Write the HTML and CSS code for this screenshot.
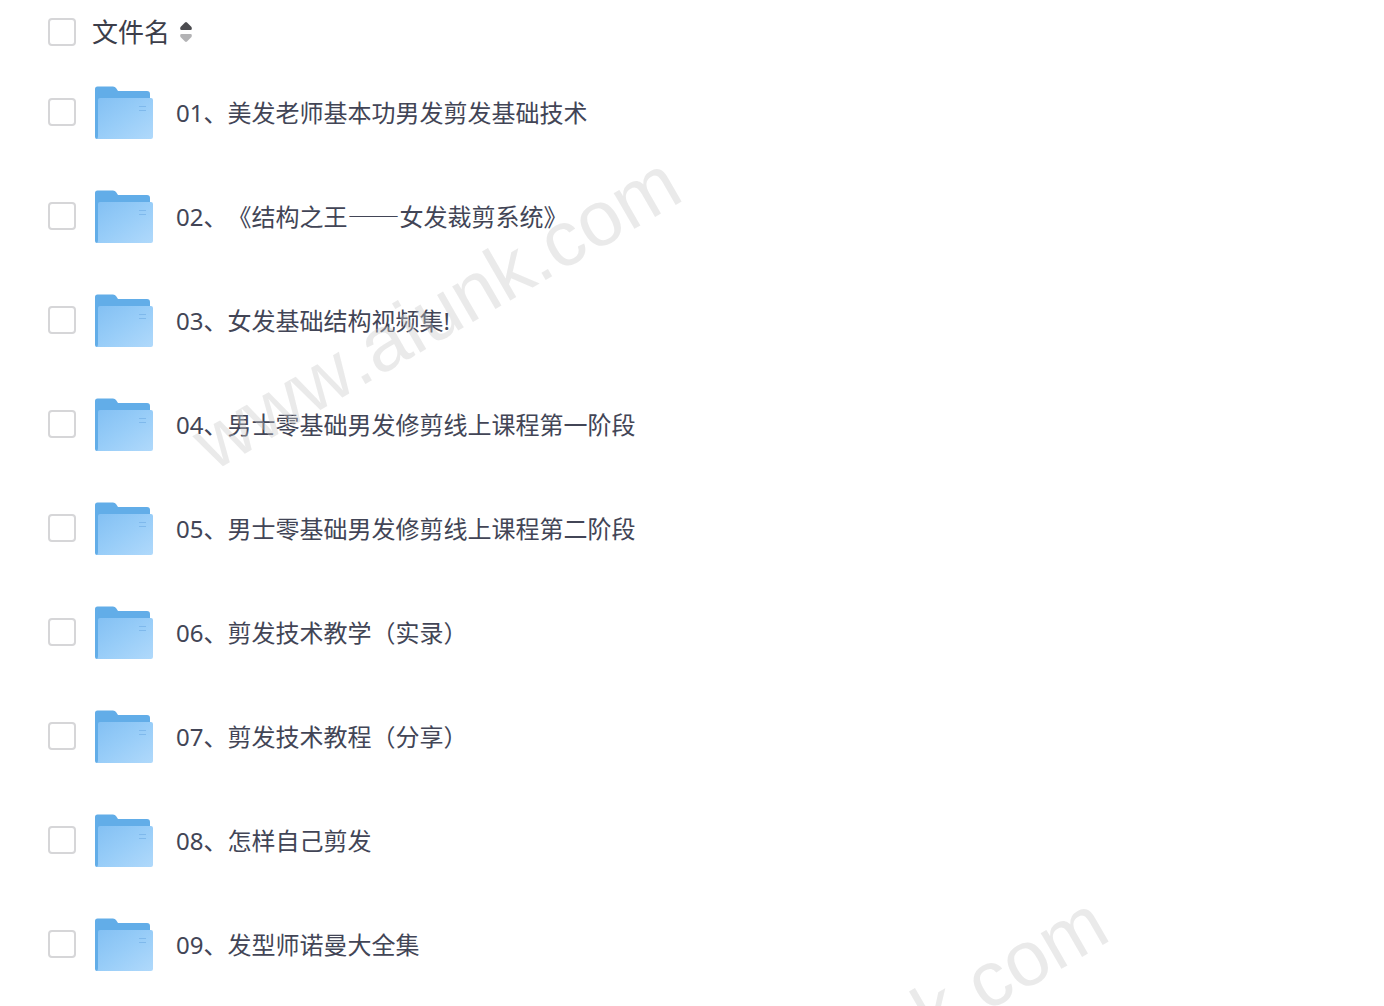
FILE: index.html
```html
<!DOCTYPE html>
<html lang="zh-CN">
<head>
    <meta charset="UTF-8">
    <meta name="viewport" content="width=device-width, initial-scale=1.0">
    <title>文件名</title>
    <link rel="stylesheet" href="styles.css">
</head>
<body>
    <svg class="defs" width="0" height="0" aria-hidden="true">
        <defs>
            <linearGradient id="folder-front" x1="0" y1="0" x2="1" y2="1">
                <stop offset="0" stop-color="#83c0f3"/>
                <stop offset="0.5" stop-color="#98cdf8"/>
                <stop offset="1" stop-color="#b0d9fb"/>
            </linearGradient>
            <symbol id="folder" viewBox="0 0 60 54">
                <path d="M1 3Q1 .5 3.500 .5H19Q21 .5 22 2L24 5H53Q56 5 56 8V50H1Z" fill="#62ade8"/>
                <path d="M1 40H5V53H3Q1 53 1 51Z" fill="#62ade8"/>
                <path d="M4 14Q4 12 6 12H57Q59 12 59 14V51Q59 53 57 53H3Q4 52 4 50Z" fill="url(#folder-front)"/>
                <path d="M45 20.500H52M45 24.500H52" stroke="#7fb9ec" stroke-width="1" fill="none"/>
            </symbol>
        </defs>
    </svg>
    <main class="page">
        <table class="file-list">
            <thead>
                <tr>
                    <th class="col-check"><input class="check" type="checkbox" aria-label="全选"></th>
                    <th class="col-title" colspan="2">
                        <button class="sort" type="button">文件名
                            <svg class="sort-icon" viewBox="0 0 14 22" aria-hidden="true">
                                <path d="M6 1.500Q7 .7 8 1.500L12.500 6Q13.500 9 11.500 9H2.500Q.5 9 1.500 6Z" fill="#4b4b4f"/>
                                <path d="M2.500 13H11.500Q13.500 13 12.500 16L8 20.500Q7 21.300 6 20.500L1.500 16Q.5 13 2.500 13Z" fill="#b3b3b5"/>
                            </svg>
                        </button>
                    </th>
                </tr>
            </thead>
            <tbody>
                <tr>
                    <td class="col-check"><input class="check" type="checkbox" id="f1"></td>
                    <td class="col-icon"><svg class="folder" aria-hidden="true"><use href="#folder"/></svg></td>
                    <td class="col-name"><label for="f1">01、美发老师基本功男发剪发基础技术</label></td>
                </tr>
                <tr>
                    <td class="col-check"><input class="check" type="checkbox" id="f2"></td>
                    <td class="col-icon"><svg class="folder" aria-hidden="true"><use href="#folder"/></svg></td>
                    <td class="col-name"><label for="f2">02、《结构之王<span class="dash">——</span>女发裁剪系统》</label></td>
                </tr>
                <tr>
                    <td class="col-check"><input class="check" type="checkbox" id="f3"></td>
                    <td class="col-icon"><svg class="folder" aria-hidden="true"><use href="#folder"/></svg></td>
                    <td class="col-name"><label for="f3">03、女发基础结构视频集!</label></td>
                </tr>
                <tr>
                    <td class="col-check"><input class="check" type="checkbox" id="f4"></td>
                    <td class="col-icon"><svg class="folder" aria-hidden="true"><use href="#folder"/></svg></td>
                    <td class="col-name"><label for="f4">04、男士零基础男发修剪线上课程第一阶段</label></td>
                </tr>
                <tr>
                    <td class="col-check"><input class="check" type="checkbox" id="f5"></td>
                    <td class="col-icon"><svg class="folder" aria-hidden="true"><use href="#folder"/></svg></td>
                    <td class="col-name"><label for="f5">05、男士零基础男发修剪线上课程第二阶段</label></td>
                </tr>
                <tr>
                    <td class="col-check"><input class="check" type="checkbox" id="f6"></td>
                    <td class="col-icon"><svg class="folder" aria-hidden="true"><use href="#folder"/></svg></td>
                    <td class="col-name"><label for="f6">06、剪发技术教学（实录）</label></td>
                </tr>
                <tr>
                    <td class="col-check"><input class="check" type="checkbox" id="f7"></td>
                    <td class="col-icon"><svg class="folder" aria-hidden="true"><use href="#folder"/></svg></td>
                    <td class="col-name"><label for="f7">07、剪发技术教程（分享）</label></td>
                </tr>
                <tr>
                    <td class="col-check"><input class="check" type="checkbox" id="f8"></td>
                    <td class="col-icon"><svg class="folder" aria-hidden="true"><use href="#folder"/></svg></td>
                    <td class="col-name"><label for="f8">08、怎样自己剪发</label></td>
                </tr>
                <tr>
                    <td class="col-check"><input class="check" type="checkbox" id="f9"></td>
                    <td class="col-icon"><svg class="folder" aria-hidden="true"><use href="#folder"/></svg></td>
                    <td class="col-name"><label for="f9">09、发型师诺曼大全集</label></td>
                </tr>
            </tbody>
        </table>
        <span class="watermark watermark-top">www.aiunk.com</span>
        <span class="watermark watermark-bottom">www.aiunk.com</span>
    </main>
</body>
</html>
```
FILE: styles.css
```css
body {
    margin: 0;
    background: #fff;
    color: #424556;
    font-family: "Noto Sans", "Noto Sans CJK SC", sans-serif;
    font-size: 24px;
    text-spacing-trim: space-all;
}
.defs {
    position: absolute;
}
.page {
    position: relative;
    box-sizing: border-box;
    min-height: 100vh;
    overflow: hidden;
}
.file-list {
    width: 100%;
    border-collapse: collapse;
}
th,
td {
    padding: 0;
    text-align: left;
    vertical-align: middle;
    font-weight: 400;
}
thead tr {
    height: 60px;
}
thead th {
    padding-top: 4px;
}
tbody tr {
    height: 104px;
}
.file-list .col-check {
    width: 44px;
    padding-left: 48px;
}
.col-icon {
    width: 84px;
}
.col-icon,
.col-name {
    padding-top: 2px;
}
.check {
    display: block;
    appearance: none;
    box-sizing: border-box;
    width: 28px;
    height: 28px;
    margin: 0;
    border: 2px solid #d6d6d8;
    border-radius: 4px;
    background: #fff;
}
.check:checked {
    background: #62ade8;
}
.sort {
    display: flex;
    align-items: center;
    gap: 9px;
    padding: 0;
    border: 0;
    background: none;
    color: #3c3e4a;
    font: inherit;
    font-size: 26px;
    line-height: 36px;
}
.sort-icon {
    width: 14px;
    height: 22px;
}
.folder {
    display: block;
    width: 60px;
    height: 54px;
    margin-left: 2px;
}
.col-name label {
    display: block;
    line-height: 36px;
}
.dash {
    font-family: "Noto Sans CJK SC", sans-serif;
    font-size: 26px;
    line-height: 24px;
}

/* site watermark, lies over the list */
.watermark {
    position: absolute;
    color: rgba(200, 200, 200, 0.38);
    font-family: "Liberation Sans", Arial, sans-serif;
    font-size: 78px;
    font-kerning: none;
    line-height: 78px;
    white-space: nowrap;
    transform: rotate(-30deg);
    transform-origin: 0 66px;
    pointer-events: none;
}
.watermark-top {
    left: 213px;
    top: 406px;
}
.watermark-bottom {
    left: 640px;
    top: 1146px;
}
```
